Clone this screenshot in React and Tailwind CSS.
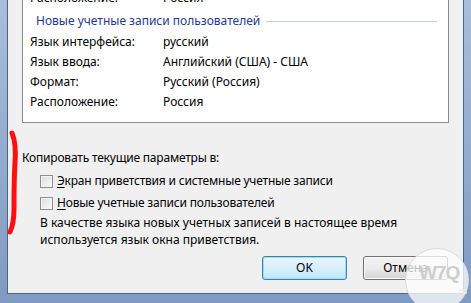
import React from "react";

function Row({ label, value }) {
  return (
    <div className="flex h-[20px] items-center">
      <span className="w-[133px] shrink-0">{label}</span>
      <span>{value}</span>
    </div>
  );
}

function Check({ first, rest }) {
  return (
    <div className="flex h-[20px] items-center pl-[18px]">
      <span className="mr-[4px] h-[13px] w-[13px] border border-[#8e8f8f] bg-gradient-to-br from-[#dcdcdc] to-[#fbfbfb] shadow-[inset_0_0_0_1px_#f4f4f4]" />
      <span>
        <span className="underline underline-offset-2">{first}</span>
        {rest}
      </span>
    </div>
  );
}

export default function App() {
  return (
    <div
      className="relative h-[303px] w-[471px] overflow-hidden bg-gradient-to-b from-[#a9bedb] to-[#7f9ac2] pb-[9px] pl-[7px] pr-[7px] text-[12px] text-black"
      style={{ fontFamily: '"Noto Sans", "Open Sans", sans-serif' }}
    >
      <div className="flex h-full flex-col border-x border-b border-[#51647f] bg-[#f0f0f0] px-[14px]">
        {/* панель с параметрами */}
        <div className="-mt-[13px] border border-[#898c95] bg-white pb-[10px] pl-[7px]">
          <Row label="Расположение:" value="Россия" />
          <div className="mt-[3px] flex h-[20px] items-center pl-[6px] pr-[11px] text-[#1e3a8f]">
            <span className="shrink-0">Новые учетные записи пользователей</span>
            <span className="ml-[6px] h-px flex-1 bg-[#c3cddc]" />
          </div>
          <div className="mt-[1px]">
            <Row label="Язык интерфейса:" value="русский" />
            <Row label="Язык ввода:" value="Английский (США) - США" />
            <Row label="Формат:" value="Русский (Россия)" />
            <Row label="Расположение:" value="Россия" />
          </div>
        </div>

        <div className="mt-[25px] flex h-[20px] items-center tracking-[-0.2px]">Копировать текущие параметры в:</div>
        <div className="mt-[3px] tracking-[-0.2px]">
          <Check first="Э" rest="кран приветствия и системные учетные записи" />
        </div>
        <div className="mt-[2px] tracking-[-0.2px]">
          <Check first="Н" rest="овые учетные записи пользователей" />
        </div>
        <p className="mt-[1px] pl-[18px] leading-[17px]">
          В качестве языка новых учетных записей в настоящее время
          <br />
          используется язык окна приветствия.
        </p>

        <div className="mt-[8px] flex justify-end gap-[16px] pr-[1px]">
          <button className="h-[24px] w-[85px] rounded-[3px] border border-[#3c7fb1] bg-gradient-to-b from-[#e8f5fd] via-[#d9f0fc] to-[#bee6fd] shadow-[inset_0_0_0_1px_#9fdcf7]">
            OK
          </button>
          <button className="h-[24px] w-[85px] rounded-[3px] border border-[#707070] bg-gradient-to-b from-[#f2f2f2] via-[#ebebeb] to-[#d3d3d3] shadow-[inset_0_0_0_1px_#fcfcfc]">
            Отмена
          </button>
        </div>
      </div>

      {/* красная пометка */}
      <svg className="absolute left-0 top-[128px]" width="24" height="110" viewBox="0 0 24 110">
        <path
          d="M12 5 C15 12 16 22 15 35 C14 50 14 65 14 80 C14 92 12 100 10 104"
          stroke="#ff1010"
          strokeWidth="5"
          strokeLinecap="round"
          fill="none"
        />
      </svg>

      {/* водяной знак */}
      <div className="absolute left-[405px] top-[248px] h-[64px] w-[64px] rounded-full border border-[#dadada] bg-white/75">
        <span
          className="absolute left-[13px] top-[14px] text-[19px] font-bold leading-none tracking-[-1px] text-[#cdcdcd]"
          style={{ fontFamily: '"Liberation Sans", sans-serif' }}
        >
          W7Q
        </span>
        <span className="absolute left-[50px] top-[38px] text-[8px] font-bold leading-none text-[#eeeeee]">.ru</span>
      </div>
    </div>
  );
}
